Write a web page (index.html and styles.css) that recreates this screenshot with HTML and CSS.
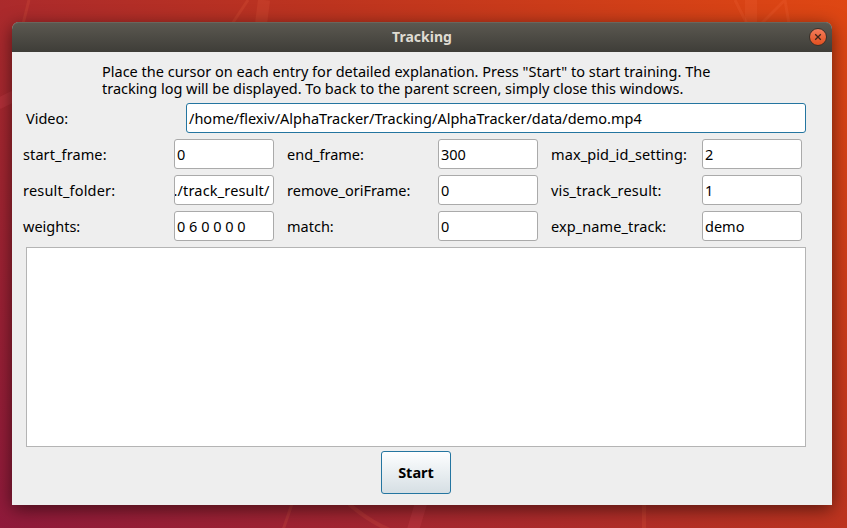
FILE: index.html
```html
<!DOCTYPE html>
<html lang="en">
<head>
<meta charset="utf-8">
<title>Tracking</title>
<link rel="stylesheet" href="styles.css">
</head>
<body>
<svg class="wallpaper" viewBox="0 0 847 528" aria-hidden="true">
  <g fill="none" stroke="#ff7a50" stroke-opacity=".14">
    <path d="M29 0 23 24" stroke-width="3"/>
    <path d="M248 0 232 24" stroke-width="3"/>
    <path d="M264 0 261 24" stroke-width="12"/>
    <path d="M751 0V24" stroke-width="12"/>
    <path d="M735 0 747 24M785 0 757 28M785 0 789 24" stroke-width="3"/>
    <path d="M-2 104 14 96" stroke-width="11" stroke="#ff6070"/>
    <path d="M292 504 283 530" stroke-width="3"/>
    <path d="M349 504Q370 522 390 530" stroke-width="4"/>
    <path d="M422 500 413 530" stroke-width="12" stroke="#ff6070"/>
    <path d="M644 500V530" stroke-width="4"/>
  </g>
</svg>
<main class="window">
  <header class="titlebar">
    <h1 class="title">Tracking</h1>
    <button class="close" aria-label="Close"><svg viewBox="0 0 16 16"><path d="M5.2 5.2 10.8 10.8M10.8 5.2 5.2 10.8"/></svg></button>
  </header>
  <section class="content">
    <p class="intro">Place the cursor on each entry for detailed explanation. Press "Start" to start training. The<br><span class="intro-end">tracking log will be displayed. To back to the parent screen, simply close this windows.</span></p>
    <div class="video"><span class="label">Video:</span><div class="field active">/home/flexiv/AlphaTracker/Tracking/AlphaTracker/data/demo.mp4</div></div>
    <div class="options">
      <span class="label wide">start_frame:</span><div class="field">0</div>
      <span class="label">end_frame:</span><div class="field">300</div>
      <span class="label wide">max_pid_id_setting:</span><div class="field">2</div>
      <span class="label wider">result_folder:</span><div class="field scrolled">./track_result/</div>
      <span class="label">remove_oriFrame:</span><div class="field">0</div>
      <span class="label wider">vis_track_result:</span><div class="field">1</div>
      <span class="label">weights:</span><div class="field">0 6 0 0 0 0</div>
      <span class="label">match:</span><div class="field">0</div>
      <span class="label wide">exp_name_track:</span><div class="field">demo</div>
    </div>
    <div class="log"></div>
    <button class="start">Start</button>
  </section>
</main>
</body>
</html>
```
FILE: styles.css
```css
* { box-sizing: border-box; }
body {
  margin: 0;
  width: 847px;
  height: 528px;
  overflow: hidden;
  font: 14.5px/17px "Noto Sans", "Open Sans", sans-serif;
  color: #000;
  background: linear-gradient(45deg, #8f1a3b 0%, #ab2a2c 38%, #bd341f 62%, #df4713 100%);
}
.wallpaper { position: absolute; inset: 0; width: 847px; height: 528px; }
.window {
  position: relative;
  width: 820px;
  height: 483px;
  margin: 22px 0 0 12px;
  border-radius: 7px 7px 0 0;
  background: #eee;
  box-shadow: 0 4px 18px rgba(0, 0, 0, .55);
}
.titlebar {
  display: grid;
  grid-template-columns: 1fr 18px;
  align-items: center;
  height: 30px;
  padding: 0 5px 0 23px;
  border-radius: 7px 7px 0 0;
  background: linear-gradient(#5c5951, #3e3d38);
  box-shadow: inset 0 1px #69665d;
}
.title {
  margin: 0;
  text-align: center;
  font-size: 14px;
  line-height: 30px;
  font-weight: 700;
  color: #dfdbd2;
}
.close {
  width: 18px;
  height: 18px;
  padding: 0;
  border: 1px solid #3a3029;
  border-radius: 50%;
  background: linear-gradient(#f37c5b, #e2501f);
}
.close svg { display: block; width: 16px; height: 16px; }
.close path { fill: none; stroke: #40251a; stroke-width: 1.3; }
.content { display: flex; flex-direction: column; padding: 11px 26px 0 11px; }
.intro { margin: 0 0 6px 79px; height: 34px; white-space: nowrap; }
.intro-end { letter-spacing: -.025px; }
.video {
  display: grid;
  grid-template-columns: 160px 620px;
  align-items: center;
  padding-left: 3px;
}
.options {
  display: grid;
  grid-template-columns: 151px 100px 164px 100px 164px 100px;
  row-gap: 6px;
  align-items: center;
  margin-top: 6px;
}
.options .label:not(:nth-child(6n + 1)) { padding-left: 13px; }
.label { white-space: nowrap; }
.wide { letter-spacing: .1px; }
.wider { letter-spacing: .19px; }
.field {
  height: 30px;
  padding: 0 2px;
  border: 1px solid #aaa;
  border-radius: 3px;
  background: #fff;
  line-height: 28px;
  white-space: nowrap;
  overflow: hidden;
}
.field.active { border-color: #2475a0; }
.scrolled { letter-spacing: .16px; text-indent: -3.5px; }
.log {
  width: 780px;
  height: 200px;
  margin: 6px 0 4px 3px;
  border: 1px solid #b4b4b4;
  background: #fff;
}
.start {
  width: 70px;
  height: 43px;
  margin-left: 358px;
  padding: 0 0 1px;
  border: 1px solid #2475a0;
  border-radius: 3px;
  background: linear-gradient(#fdfeff, #d6dfe4);
  font: 700 14.5px/20px "Noto Sans", sans-serif;
  color: #000;
}
```
